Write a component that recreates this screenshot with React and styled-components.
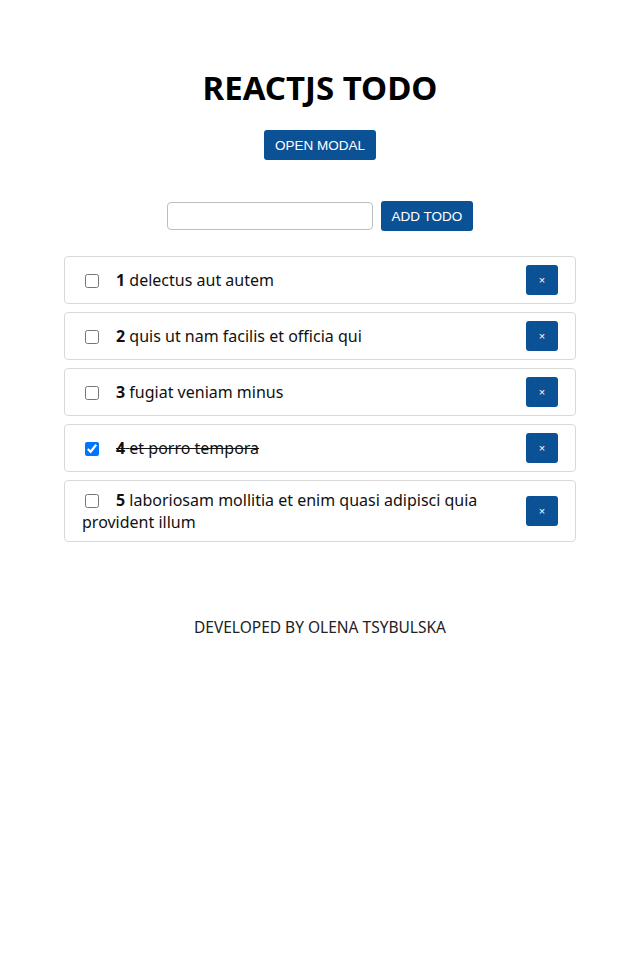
import styled, { createGlobalStyle } from 'styled-components';

const GlobalStyle = createGlobalStyle`
  body {
    margin: 0;
    background: #ffffff;
    font-family: "Noto Sans", "Open Sans", sans-serif;
    color: #111;
  }
`;

const Page = styled.div`
  width: 640px;
  display: flex;
  flex-direction: column;
  align-items: center;
  padding-top: 68px;
`;

const Title = styled.h1`
  margin: 0;
  font-size: 33px;
  font-weight: 700;
  line-height: 40px;
  color: #000;
`;

const BlueButton = styled.button`
  background-color: #0b5196;
  color: #fff;
  border: none;
  border-radius: 3px;
  font-family: "Liberation Sans", Arial, sans-serif;
  font-size: ${props => props.fs || 14}px;
  height: 30px;
  padding: 0 ${props => props.px || 12}px;
  cursor: pointer;
`;

const ModalRow = styled.div`
  margin-top: 22px;
`;

const Form = styled.form`
  display: flex;
  align-items: center;
  gap: 8px;
  margin-top: 41px;
`;

const Input = styled.input`
  width: 206px;
  height: 28px;
  box-sizing: border-box;
  border: 1px solid #bdbdbd;
  border-radius: 4px;
  padding: 0 6px;
`;

const List = styled.ul`
  list-style: none;
  margin: 25px 0 0;
  padding: 0;
  width: 512px;
  display: flex;
  flex-direction: column;
  gap: 8px;
`;

const Item = styled.li`
  display: flex;
  align-items: center;
  justify-content: space-between;
  gap: 16px;
  padding: 8px 17px;
  border: 1px solid #d9d9d9;
  border-radius: 4px;
  min-height: 30px;
`;

const Label = styled.label`
  font-size: 16px;
  line-height: 22px;
  text-decoration: ${props => (props.done ? 'line-through' : 'none')};
`;

const Check = styled.input`
  margin: 0 17px 0 3px;
  width: 14px;
  height: 14px;
  vertical-align: -2px;
`;

const Num = styled.b`
  font-weight: 700;
`;

const DeleteButton = styled(BlueButton)`
  width: 32px;
  padding: 0;
  font-size: 11px;
  flex-shrink: 0;
`;

const Footer = styled.footer`
  margin-top: 74px;
  font-size: 15.5px;
  color: #222;
`;

const todos = [
  { id: 1, title: 'delectus aut autem', done: false },
  { id: 2, title: 'quis ut nam facilis et officia qui', done: false },
  { id: 3, title: 'fugiat veniam minus', done: false },
  { id: 4, title: 'et porro tempora', done: true },
  { id: 5, title: 'laboriosam mollitia et enim quasi adipisci quia provident illum', done: false },
];

const App = () => {
  return (
    <>
      <GlobalStyle />
      <Page>
        <Title>REACTJS TODO</Title>
        <ModalRow>
          <BlueButton px={11} fs={13.5}>OPEN MODAL</BlueButton>
        </ModalRow>
        <Form onSubmit={e => e.preventDefault()}>
          <Input type="text" />
          <BlueButton fs={13.5} px={11}>ADD TODO</BlueButton>
        </Form>
        <List>
          {todos.map(todo => (
            <Item key={todo.id}>
              <Label done={todo.done}>
                <Check type="checkbox" defaultChecked={todo.done} />
                <Num>{todo.id}</Num> {todo.title}
              </Label>
              <DeleteButton>×</DeleteButton>
            </Item>
          ))}
        </List>
        <Footer>DEVELOPED BY OLENA TSYBULSKA</Footer>
      </Page>
    </>
  );
};

export default App;
